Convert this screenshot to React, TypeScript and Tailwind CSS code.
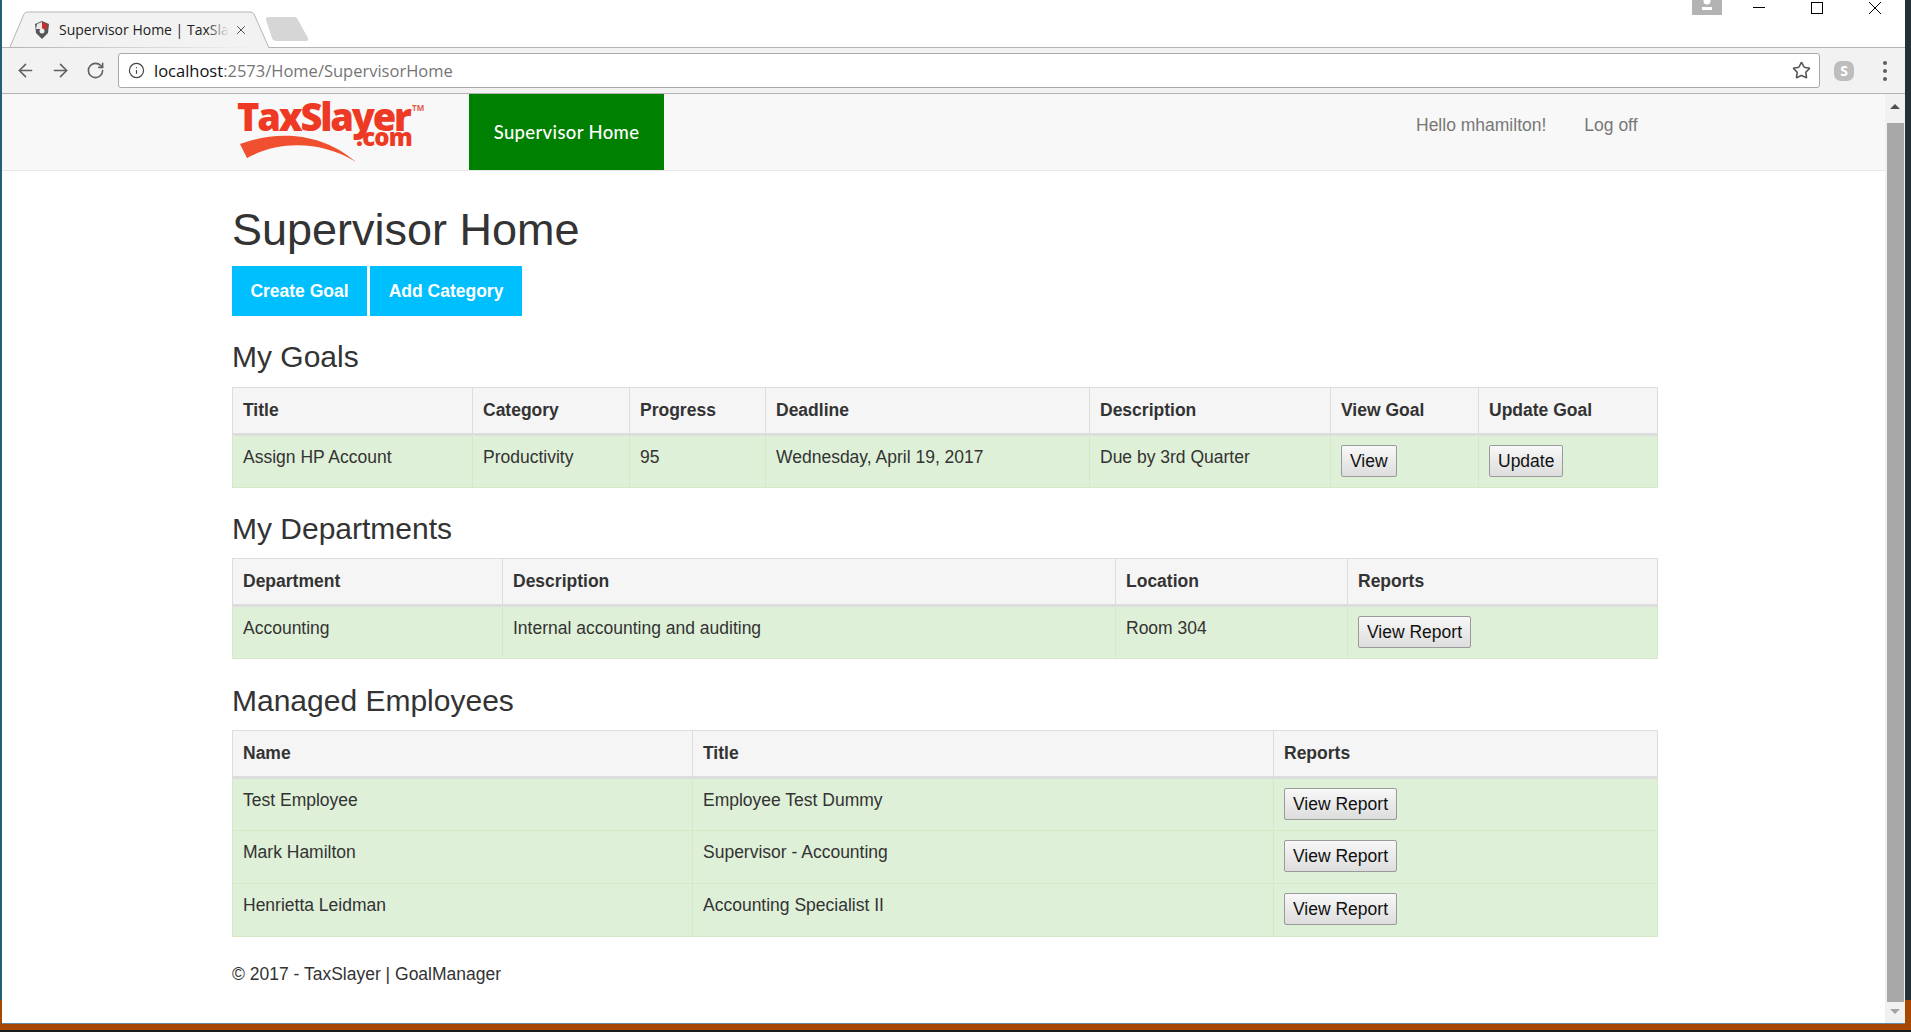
import React from 'react';
import { ArrowLeft, ArrowRight, RotateCw, Info, Star, X } from 'lucide-react';

const sans = 'font-["Liberation_Sans",Arial,sans-serif]';

// Native looking button used inside the tables
const TableButton = ({ label }: { label: string }) => (
  <button className="h-[32px] px-[8px] rounded-[2px] border border-[#9a9a9a] bg-gradient-to-b from-[#f8f8f8] to-[#dddddd] text-[17.5px] leading-[20px] text-[#111111]">
    {label}
  </button>
);

type Cell = string | { button: string };

const DataTable = ({ widths, headers, rows }: { widths: number[]; headers: string[]; rows: Cell[][] }) => (
  <table className="w-[1425px] table-fixed border-collapse text-[17.5px] leading-[24px] text-[#333333]">
    <colgroup>
      {widths.map((w, i) => (
        <col key={i} style={{ width: w }} />
      ))}
    </colgroup>
    <thead>
      <tr className="bg-[#f5f5f5] h-[47px]">
        {headers.map((h) => (
          <th key={h} className="border border-[#dddddd] border-b-[3px] px-[10px] pb-[2px] text-left font-bold">
            {h}
          </th>
        ))}
      </tr>
    </thead>
    <tbody>
      {rows.map((row, r) => (
        <tr key={r} className="bg-[#dff0d8] h-[53px]">
          {row.map((c, i) => (
            <td key={i} className="border border-[#d6e9c6] px-[10px] pt-[9px] align-top">
              {typeof c === 'string' ? c : <TableButton label={c.button} />}
            </td>
          ))}
        </tr>
      ))}
    </tbody>
  </table>
);

const TabStrip = () => (
  <div className="relative h-[48px] flex justify-between border-b border-[#b4b4b4] bg-white">
    <div className="relative w-[330px] h-[47px]">
      <svg className="absolute left-0 top-0" width="330" height="48" viewBox="0 0 330 48">
        <path d="M8 47 L22 14 Q23 12 26 12 L248 12 Q251 12 252 14 L267 48" fill="#f2f2f2" stroke="#b4b4b4" strokeWidth="1" />
        <path d="M264 20 Q263 17 267 17 L292 17 Q295 17 296 20 L306 38 Q307 41 304 41 L274 41 Q271 41 270 38 Z" fill="#d6d6d6" />
      </svg>
      <svg className="absolute left-[31px] top-[20px]" width="18" height="20" viewBox="0 0 18 20">
        <path d="M2 4 L9 1 L16 4 L15 13 L9 19 L3 13 Z" fill="#555555" />
        <path d="M4 4 L9 2 L9 9 L3 9 Z" fill="#e8e8e8" />
        <path d="M9 2 L14 4 L14 9 L9 9 Z" fill="#c9302c" />
        <circle cx="9" cy="11" r="2.5" fill="#eeeeee" />
      </svg>
      <span className={`absolute left-[57px] top-[20px] whitespace-nowrap text-[14px] leading-[20px] text-[#222222] font-["Open_Sans",sans-serif]`}>
        Supervisor Home | TaxSla
      </span>
      <div className="absolute left-[205px] top-[18px] w-[22px] h-[24px] bg-gradient-to-r from-transparent to-[#f2f2f2]" />
      <X className="absolute left-[232px] top-[23px] text-[#444444]" size={14} strokeWidth={1.6} />
    </div>
    <div className="flex items-start h-[16px]">
      <div className="w-[30px] h-[15px] bg-[#b3b3b3] mr-[31px] flex justify-center overflow-hidden">
        <svg width="14" height="12" viewBox="0 0 14 12">
          <circle cx="7" cy="1" r="3.5" fill="#ffffff" />
          <rect x="2" y="7" width="10" height="3" fill="#ffffff" />
        </svg>
      </div>
      <div className="w-[12px] h-px bg-black mt-[7px] mr-[46px]" />
      <div className="w-[12px] h-[12px] border border-black mt-[2px] mr-[45px]" />
      <svg className="mt-[1px] mr-[23px]" width="14" height="14" viewBox="0 0 14 14">
        <path d="M1 1 L13 13 M13 1 L1 13" stroke="#000000" strokeWidth="1" />
      </svg>
    </div>
  </div>
);

const Toolbar = () => (
  <div className="h-[46px] flex items-center bg-[#f2f2f2] border-b border-[#b4b4b4]">
    <ArrowLeft className="ml-[13px] text-[#5f5f5f]" size={21} strokeWidth={1.8} />
    <ArrowRight className="ml-[14px] text-[#5f5f5f]" size={21} strokeWidth={1.8} />
    <RotateCw className="ml-[15px] text-[#5f5f5f]" size={19} strokeWidth={2} />
    <div className="ml-[13px] w-[1702px] h-[35px] flex items-center bg-white border border-[#a9a9a9] rounded-[3px]">
      <Info className="ml-[9px] text-[#444444]" size={17} strokeWidth={1.7} />
      <span className='ml-[9px] pt-[1px] text-[16.5px] font-["Open_Sans",sans-serif] text-[#111111]'>
        localhost<span className="text-[#757575]">:2573/Home/SupervisorHome</span>
      </span>
      <Star className="ml-auto mr-[8px] text-[#555555]" size={19} strokeWidth={2} />
    </div>
    <div className="ml-[14px] w-[20px] h-[20px] rounded-[7px] bg-[#bdbdbd] flex items-center justify-center text-[14px] font-bold text-white">
      S
    </div>
    <div className="ml-[29px] flex flex-col gap-[4px]">
      <div className="w-[4px] h-[4px] rounded-full bg-[#5f5f5f]" />
      <div className="w-[4px] h-[4px] rounded-full bg-[#5f5f5f]" />
      <div className="w-[4px] h-[4px] rounded-full bg-[#5f5f5f]" />
    </div>
  </div>
);

const Logo = () => (
  <div className="relative w-[190px] h-[76px] ml-[235px] text-[#ee3a24] font-['Open_Sans',sans-serif]">
    <span className="absolute left-0 top-[4px] text-[38px] leading-[36px] font-extrabold tracking-[-2.2px] whitespace-nowrap">TaxSlayer</span>
    <span className="absolute left-[175px] top-[9px] text-[8px] leading-[9px] font-bold text-[#e25b48]">TM</span>
    <span className="absolute left-[119px] top-[29px] text-[24px] leading-[28px] font-extrabold tracking-[-0.8px]">.com</span>
    <svg className="absolute left-[1px] top-[37px]" width="120" height="34" viewBox="0 0 120 34">
      <path d="M2 13 C32 2 78 -3 118 31 C84 10 42 9 9 27 Z" fill="#f0502f" />
    </svg>
  </div>
);

const Navbar = () => (
  <div className={`h-[77px] flex bg-[#f8f8f8] border-b border-[#e7e7e7] ${sans}`}>
    <Logo />
    <div className="ml-[42px] w-[195px] h-[76px] pt-[1px] bg-[#008000] flex items-center justify-center text-white text-[18.5px] font-['Lato',sans-serif] font-medium tracking-[0.35px]">
      Supervisor Home
    </div>
    <span className="ml-[752px] mt-[19px] text-[17.5px] leading-[24px] text-[#777777]">Hello mhamilton!</span>
    <span className="ml-[38px] mt-[19px] text-[17.5px] leading-[24px] text-[#777777]">Log off</span>
  </div>
);

const Scrollbar = () => (
  <div className="w-[20px] bg-[#f1f1f1] flex flex-col items-center">
    <div className="h-[29px] pt-[10px]">
      <div className="w-0 h-0 border-x-[5px] border-x-transparent border-b-[5px] border-b-[#505050]" />
    </div>
    <div className="w-[17px] flex-1 bg-[#a8a8a8]" />
    <div className="h-[21px] pt-[7px]">
      <div className="w-0 h-0 border-x-[5px] border-x-transparent border-t-[5px] border-t-[#a3a3a3]" />
    </div>
  </div>
);

const Page = () => (
  <div className={`w-[1425px] ml-[230px] text-[#333333] ${sans}`}>
    <h1 className="mt-[34px] mb-[11px] text-[45px] leading-[50px] font-normal">Supervisor Home</h1>
    <div className="flex gap-[3px]">
      <button className="w-[135px] h-[50px] bg-[#00bfff] text-white text-[17.5px] font-bold">Create Goal</button>
      <button className="w-[152px] h-[50px] bg-[#00bfff] text-white text-[17.5px] font-bold">Add Category</button>
    </div>

    <h2 className="mt-[24px] mb-[13px] text-[30px] leading-[34px] font-normal">My Goals</h2>
    <DataTable
      widths={[240, 157, 136, 324, 241, 148, 179]}
      headers={['Title', 'Category', 'Progress', 'Deadline', 'Description', 'View Goal', 'Update Goal']}
      rows={[['Assign HP Account', 'Productivity', '95', 'Wednesday, April 19, 2017', 'Due by 3rd Quarter', { button: 'View' }, { button: 'Update' }]]}
    />

    <h2 className="mt-[24px] mb-[12px] text-[30px] leading-[34px] font-normal">My Departments</h2>
    <DataTable
      widths={[270, 613, 232, 310]}
      headers={['Department', 'Description', 'Location', 'Reports']}
      rows={[['Accounting', 'Internal accounting and auditing', 'Room 304', { button: 'View Report' }]]}
    />

    <h2 className="mt-[25px] mb-[12px] text-[30px] leading-[34px] font-normal">Managed Employees</h2>
    <DataTable
      widths={[460, 581, 384]}
      headers={['Name', 'Title', 'Reports']}
      rows={[
        ['Test Employee', 'Employee Test Dummy', { button: 'View Report' }],
        ['Mark Hamilton', 'Supervisor - Accounting', { button: 'View Report' }],
        ['Henrietta Leidman', 'Accounting Specialist II', { button: 'View Report' }],
      ]}
    />

    <p className="mt-[25px] text-[17.5px] leading-[24px]">© 2017 - TaxSlayer | GoalManager</p>
  </div>
);

export default function App() {
  return (
    <div className="w-[1911px] h-[1032px] overflow-hidden flex flex-col bg-[#a84800]">
      <div className="h-[1024px] flex">
        <div className="w-[2px] flex flex-col">
          <div className="flex-1 bg-[#1f5f7a]" />
          <div className="h-[24px] bg-[#a84800]" />
        </div>
        <div className="flex-1 flex flex-col bg-white border-b border-[#5b8ba8]">
          <TabStrip />
          <Toolbar />
          <div className="flex-1 flex min-h-0">
            <div className="flex-1 min-w-0">
              <Navbar />
              <Page />
            </div>
            <Scrollbar />
          </div>
        </div>
        <div className="w-[6px] flex flex-col">
          <div className="flex-1 bg-[#22303a]" />
          <div className="h-[24px] bg-[#a84800]" />
        </div>
      </div>
      <div className="h-[6px] bg-[#a84800]" />
      <div className="h-[2px] bg-[#1c1c1c]" />
    </div>
  );
}
